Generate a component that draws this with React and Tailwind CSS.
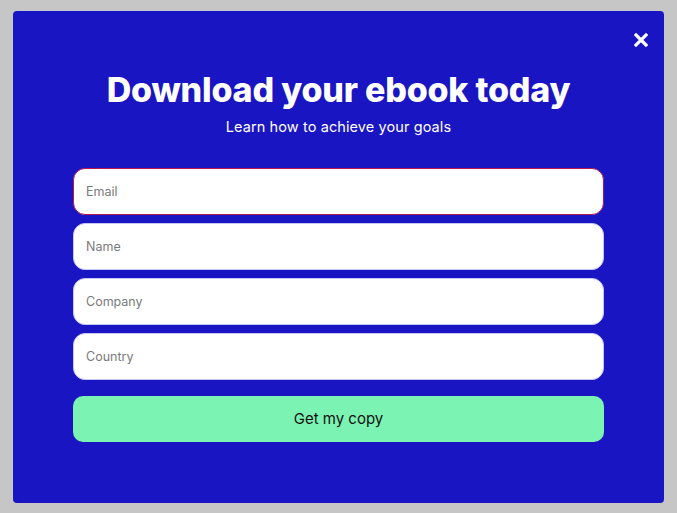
import React from "react";

const fields = ["Email", "Name", "Company", "Country"];

const App = () => {
  return (
    <div className="min-h-screen w-full bg-[#c6c6c6] pt-[11px] pl-[13px] font-['Inter',sans-serif]">
      <div className="relative w-[651px] h-[492px] rounded-[4px] bg-[#1a15c2] px-[60px] pt-[59px]">
        <button className="absolute top-[20px] right-[15px] w-[16px] h-[18px] flex items-center justify-center text-white">
          <svg width="14" height="14" viewBox="0 0 14 14">
            <path d="M2 2 L12 12 M12 2 L2 12" stroke="white" strokeWidth="3.2" strokeLinecap="square" />
          </svg>
        </button>
        <h1 className="text-center text-white text-[34px] leading-[40px] font-extrabold tracking-[-0.2px]">
          Download your ebook today
        </h1>
        <p className="text-center text-white text-[14.5px] leading-[20px] mt-[7px] tracking-[0.1px]">
          Learn how to achieve your goals
        </p>
        <form className="mt-[31px] flex flex-col gap-[8px]">
          {fields.map((f, i) => (
            <input
              key={f}
              placeholder={f}
              className={
                "h-[47px] w-full rounded-[12px] bg-white px-[12px] text-[12.5px] text-gray-800 placeholder:text-[#7a7a7a] outline-none border " +
                (i === 0 ? "border-[#b3184f]" : "border-[#c5c6f3]")
              }
            />
          ))}
          <button
            type="button"
            className="mt-[8px] h-[46px] w-full rounded-[10px] bg-[#7bf3b2] text-[15px] text-[#111]"
          >
            Get my copy
          </button>
        </form>
      </div>
    </div>
  );
};

export default App;
